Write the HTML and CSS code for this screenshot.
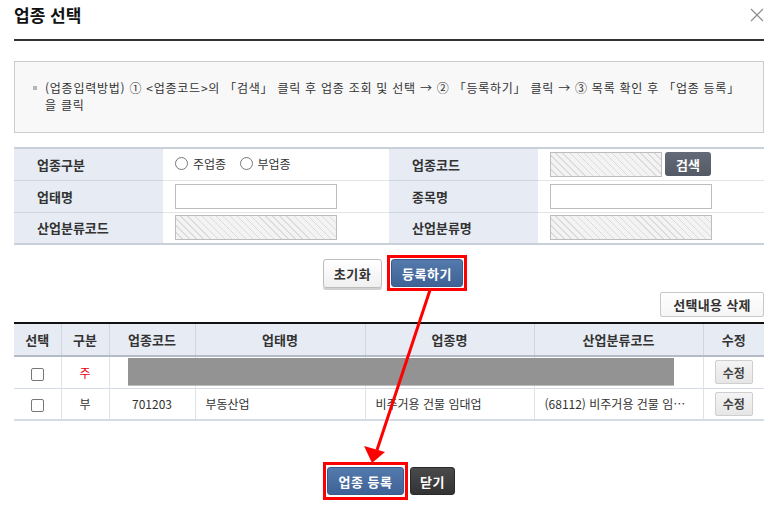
FILE: index.html
```html
<!DOCTYPE html>
<html lang="ko">
<head>
<meta charset="utf-8">
<title>업종 선택</title>
<link rel="stylesheet" href="styles.css">
</head>
<body>
<div class="dialog">
  <div class="head">
    <h1 class="title">업종 선택</h1>
    <span class="close" aria-label="닫기">
      <svg width="14" height="14" viewBox="0 0 14 14"><path d="M1 1 L13 13 M13 1 L1 13" stroke="#8a8a8a" stroke-width="1.1" fill="none"/></svg>
    </span>
  </div>

  <div class="info">
    <p class="info-text"><span class="bullet"></span>(업종입력방법) ① &lt;업종코드&gt;의 「검색」 클릭 후 업종 조회 및 선택 → ② 「등록하기」 클릭 → ③ 목록 확인 후 「업종 등록」<br>을 클릭</p>
  </div>

  <table class="form">
    <colgroup><col class="c-label"><col class="c-value"><col class="c-label"><col class="c-value"></colgroup>
    <tr>
      <th>업종구분</th>
      <td>
        <label class="radio"><span class="dot"></span>주업종</label>
        <label class="radio"><span class="dot"></span>부업종</label>
      </td>
      <th>업종코드</th>
      <td><div class="with-btn"><span class="inp hatch short"></span><button class="btn-search">검색</button></div></td>
    </tr>
    <tr>
      <th>업태명</th>
      <td><span class="inp"></span></td>
      <th>종목명</th>
      <td><span class="inp"></span></td>
    </tr>
    <tr>
      <th>산업분류코드</th>
      <td><span class="inp hatch"></span></td>
      <th>산업분류명</th>
      <td><span class="inp hatch"></span></td>
    </tr>
  </table>

  <div class="actions">
    <button class="btn btn-light">초기화</button>
    <span class="mark mark-sm"><button class="btn btn-blue">등록하기</button></span>
  </div>

  <div class="list-tools">
    <button class="btn-del">선택내용 삭제</button>
  </div>

  <div class="list-wrap">
    <table class="list">
      <colgroup>
        <col class="w1"><col class="w2"><col class="w3"><col class="w4"><col class="w5"><col class="w6"><col class="w7">
      </colgroup>
      <thead>
        <tr><th>선택</th><th>구분</th><th>업종코드</th><th>업태명</th><th>업종명</th><th>산업분류코드</th><th>수정</th></tr>
      </thead>
      <tbody>
        <tr>
          <td class="ctr"><span class="chk"></span></td>
          <td class="ctr red">주</td>
          <td class="ctr"></td>
          <td></td>
          <td></td>
          <td></td>
          <td class="ctr"><button class="btn-edit">수정</button></td>
        </tr>
        <tr>
          <td class="ctr"><span class="chk"></span></td>
          <td class="ctr">부</td>
          <td class="ctr">701203</td>
          <td>부동산업</td>
          <td>비주거용 건물 임대업</td>
          <td>(68112) 비주거용 건물 임…</td>
          <td class="ctr"><button class="btn-edit">수정</button></td>
        </tr>
      </tbody>
    </table>
    <div class="redact"></div>
  </div>

  <div class="footer">
    <span class="mark mark-lg"><button class="btn btn-blue big">업종 등록</button></span>
    <button class="btn btn-dark">닫기</button>
  </div>
</div>

<svg class="arrow" width="781" height="508" viewBox="0 0 781 508">
  <line x1="430" y1="290" x2="377" y2="450" stroke="#ff0000" stroke-width="3"/>
  <polygon points="372,463 364,446 385,452" fill="#ff0000"/>
</svg>
</body>
</html>
```

FILE: styles.css
```css
* { box-sizing: border-box; }

html, body {
  margin: 0;
  padding: 0;
  background: #fff;
}

body {
  width: 781px;
  height: 508px;
  overflow: hidden;
  position: relative;
  font-family: "Noto Sans CJK KR", "Noto Sans", "Liberation Sans", sans-serif;
  font-size: 12px;
  color: #333;
}

.dialog {
  padding: 0 17px 0 14px;
}

.head {
  height: 41px;
  display: flex;
  align-items: flex-start;
  justify-content: space-between;
  border-bottom: 2px solid #333;
}

.title {
  margin: 4px 0 0 0;
  font-size: 17px;
  font-weight: 700;
  color: #111;
  line-height: 22px;
}

.close {
  margin-top: 8px;
  display: block;
  width: 14px;
  height: 14px;
}
.close svg { display: block; }

.info {
  margin-top: 20px;
  height: 72px;
  border: 1px solid #cccccc;
  background: #f8f8f8;
  padding: 17px 18px 0 18px;
}

.info-text {
  margin: 0;
  padding-left: 12px;
  text-indent: -12px;
  line-height: 17px;
  font-size: 12px;
  color: #333;
  letter-spacing: 0.75px;
}

.bullet {
  display: inline-block;
  width: 4px;
  height: 4px;
  background: #b5b5b5;
  margin-right: 8px;
  vertical-align: middle;
  position: relative;
  top: -2px;
}

/* form table */
.form {
  margin-top: 14px;
  width: 750px;
  border-collapse: collapse;
  table-layout: fixed;
  border-top: 2px solid #c9d0da;
  border-bottom: 2px solid #c9d0da;
}
.c-label { width: 149px; }
.c-value { width: 226px; }

.form th, .form td {
  height: 32px;
  padding: 0;
  border-top: 1px solid #e4e4e4;
  vertical-align: middle;
}
.form tr:first-child th, .form tr:first-child td { border-top: 0; }

.form th {
  background: #e7ecf4;
  text-align: left;
  padding-left: 23px;
  font-weight: 700;
  font-size: 13px;
  color: #333;
  border-top-color: #cfd6e1;
}
.form td { padding-left: 12px; }

.inp {
  display: block;
  width: 162px;
  height: 25px;
  border: 1px solid #bdbdbd;
  background: #fff;
}
.inp.hatch {
  background: repeating-linear-gradient(45deg, #f3f3f3 0, #f3f3f3 4px, #dcdcdc 4px, #dcdcdc 5px);
}
.inp.short { width: 112px; }

.with-btn {
  display: flex;
  align-items: center;
  gap: 3px;
}

.btn-search {
  width: 46px;
  height: 24px;
  border: 0;
  border-radius: 3px;
  background: linear-gradient(#646b78, #535a66);
  color: #fff;
  font-family: inherit;
  font-weight: 700;
  font-size: 13px;
  padding: 0;
}

.radio {
  display: inline-flex;
  align-items: center;
  gap: 5px;
  margin-right: 10px;
  font-size: 12px;
  color: #333;
}
.dot {
  width: 13px;
  height: 13px;
  border: 1px solid #777;
  border-radius: 50%;
  background: #fff;
  display: inline-block;
}

/* buttons */
.actions {
  display: flex;
  justify-content: center;
  align-items: center;
  gap: 5px;
  margin-top: 10px;
  padding-left: 12px;
}

.btn {
  font-family: inherit;
  font-weight: 700;
  font-size: 13px;
  height: 29px;
  padding: 0 12px;
  border-radius: 3px;
  cursor: pointer;
  display: block;
  letter-spacing: 0.5px;
}

.btn-light {
  background: linear-gradient(#ffffff, #f0f0f0);
  border: 1px solid #bdbdbd;
  color: #333;
  box-shadow: 0 2px 0 #d0d0d0;
  width: 59px;
  padding: 0;
}

.btn-blue {
  background: linear-gradient(#5479ad, #3f6396);
  border: 1px solid #3a5b8c;
  color: #fff;
  width: 72px;
  height: 28px;
  padding: 0;
}

.mark {
  display: block;
  border: 3px solid #ff0000;
}
.mark-sm { padding: 1px; }
.mark-lg { padding: 2px 1px; }

.btn-dark {
  background: linear-gradient(#4a4a4a, #333);
  border: 1px solid #2a2a2a;
  color: #fff;
  width: 45px;
  height: 28px;
  padding: 0;
}

.list-tools {
  display: flex;
  justify-content: flex-end;
  margin-top: 1px;
}

.btn-del {
  height: 25px;
  width: 104px;
  border: 1px solid #c8c8c8;
  border-radius: 2px;
  background: linear-gradient(#ffffff, #f5f5f5);
  font-family: inherit;
  font-weight: 700;
  font-size: 13px;
  color: #333;
  padding: 0;
  letter-spacing: 0.3px;
}

/* list */
.list-wrap {
  position: relative;
  margin-top: 5px;
}

.list {
  width: 750px;
  border-collapse: collapse;
  table-layout: fixed;
  border-top: 2px solid #111;
  border-bottom: 2px solid #d6dce5;
}
.w1 { width: 47px; }
.w2 { width: 48px; }
.w3 { width: 86px; }
.w4 { width: 170px; }
.w5 { width: 169px; }
.w6 { width: 169px; }
.w7 { width: 61px; }

.list th {
  height: 33px;
  background: #e7ecf4;
  font-weight: 700;
  font-size: 13px;
  color: #333;
  border-left: 1px solid #cfd6e0;
  border-bottom: 2px solid #b4bbc6;
  padding: 0;
}
.list th:first-child, .list td:first-child { border-left: 0; }

.list td {
  height: 32px;
  border-left: 1px solid #dfe3e9;
  border-top: 1px solid #d6dce5;
  padding: 0 10px;
  font-size: 12px;
  color: #333;
  white-space: nowrap;
  overflow: hidden;
}
.list td.ctr { text-align: center; padding: 0; }
.list td.red { color: #e60012; }

.chk {
  display: inline-block;
  width: 13px;
  height: 13px;
  border: 1px solid #777;
  border-radius: 2px;
  background: #fff;
  vertical-align: middle;
}

.btn-edit {
  width: 38px;
  height: 24px;
  border: 1px solid #cfcfcf;
  border-radius: 2px;
  background: linear-gradient(#f4f4f4, #e6e6e6);
  font-family: inherit;
  font-weight: 700;
  font-size: 12px;
  color: #444;
  padding: 0;
}

.redact {
  position: absolute;
  left: 114px;
  top: 36px;
  width: 546px;
  height: 27px;
  background: #939393;
  box-shadow: 0 1px 0 #bcbcbc;
}

.footer {
  display: flex;
  justify-content: center;
  align-items: center;
  gap: 2px;
  margin-top: 41px;
}

.btn.big {
  width: 77px;
  height: 28px;
}

.arrow {
  position: absolute;
  left: 0;
  top: 0;
  pointer-events: none;
}
```
